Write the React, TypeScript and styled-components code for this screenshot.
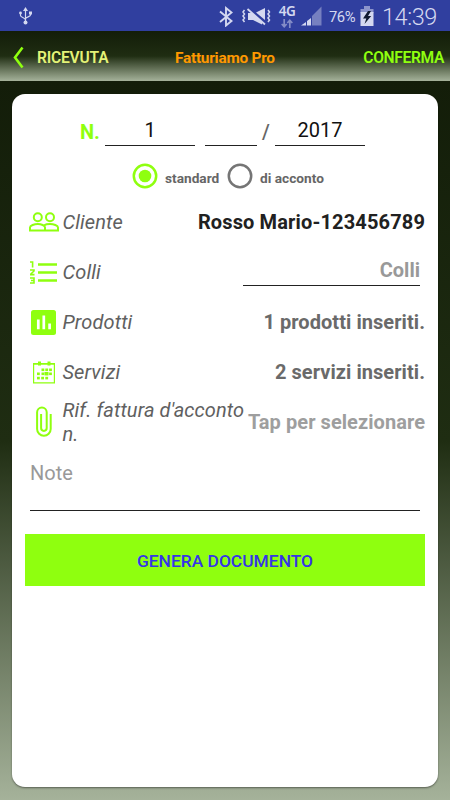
import React from 'react';
import styled, { createGlobalStyle } from 'styled-components';

const LIME = '#8fff0f';
const PALE = '#d4d8f0';

const GlobalStyle = createGlobalStyle`
  * { box-sizing: border-box; }
  body { margin: 0; font-family: Roboto, "Noto Sans", sans-serif; }
  svg { display: block; flex: none; }
`;

const Screen = styled.div`
  width: 450px;
  height: 800px;
  display: flex;
  flex-direction: column;
  overflow: hidden;
`;

const StatusBar = styled.header`
  height: 31px;
  display: flex;
  align-items: center;
  padding: 1px 12px 0 19px;
  background: #303f9f;
  color: ${PALE};
`;

const StatusIcon = styled.svg<{ $gap?: number }>`
  margin-left: ${(p) => p.$gap ?? 0}px;
`;

const Network = styled.span`
  width: 18px;
  height: 26px;
  margin-left: 6px;
  display: flex;
  flex-direction: column;
  align-items: center;
  font: 600 13.5px/16px "Noto Sans", sans-serif;
  letter-spacing: -0.5px;
  white-space: nowrap;
`;

const Battery = styled.span`
  width: 28px;
  margin-left: 7px;
  padding-top: 2px;
  font-size: 14.8px;
  letter-spacing: -0.5px;
  line-height: 30px;
  white-space: nowrap;
`;

const Clock = styled.span`
  margin-left: 8px;
  width: 56px;
  font-size: 23.5px;
  font-weight: 300;
  letter-spacing: -0.45px;
  line-height: 31px;
  padding-top: 2px;
  white-space: nowrap;
`;

const AppBar = styled.nav`
  height: 50px;
  display: grid;
  grid-template-columns: 37px 138px 1fr auto;
  align-items: center;
  padding: 3px 6px 0 0;
  background: linear-gradient(#131d09, #1f2d12 50%, #a5b29a);
`;

const BarLabel = styled.span<{ $color: string; $size?: number; $spacing?: number; $weight?: number }>`
  color: ${(p) => p.$color};
  font-size: ${(p) => p.$size ?? 16}px;
  font-weight: ${(p) => p.$weight ?? 600};
  letter-spacing: ${(p) => p.$spacing ?? 0}px;
  white-space: nowrap;
`;

const Main = styled.main`
  flex: 1;
  display: flex;
  padding: 13px 12px;
  background: linear-gradient(#131d09, #1f2d12 50%, #a5b29a);
`;

const Card = styled.section`
  flex: 1;
  display: flex;
  flex-direction: column;
  padding: 11px 13px 0;
  background: #fff;
  border-radius: 13px;
  box-shadow: 0 1px 2px rgba(0, 0, 0, 0.45);
`;

const NumberRow = styled.div`
  height: 54px;
  display: flex;
  align-items: center;
  padding-left: 55px;
  font-size: 20px;
`;

const Prefix = styled.span`
  width: 25px;
  color: ${LIME};
  font-weight: 700;
`;

const Slash = styled.span`
  width: 18px;
  text-align: center;
  color: #666;
  font-weight: 500;
`;

const Field = styled.span<{ $width: number; $align?: string }>`
  width: ${(p) => p.$width}px;
  height: 28px;
  line-height: 24px;
  border-bottom: 1px solid #222;
  text-align: ${(p) => p.$align ?? 'center'};
  color: #111;
  font-size: 20px;
`;

const NumberField = styled(Field)`
  margin-right: 10px;
`;

const HintField = styled(Field)`
  margin-right: 5px;
  color: #999;
  font-weight: 700;
`;

const RadioRow = styled.div`
  height: 34px;
  display: flex;
  align-items: center;
  padding-left: 107px;
`;

const RadioText = styled.span<{ $width: number }>`
  width: ${(p) => p.$width}px;
  margin-left: 7px;
  padding-top: 4px;
  color: #666;
  font-size: 13.7px;
  font-weight: 700;
  white-space: nowrap;
`;

const Rows = styled.div`
  margin-top: 4px;
`;

const Row = styled.div`
  height: 50px;
  display: flex;
  align-items: center;
`;

const IconSlot = styled.span`
  width: 37px;
  display: flex;
  justify-content: center;
`;

const Label = styled.span`
  flex: 1;
  padding-left: 0.5px;
  color: #606060;
  font-size: 20px;
  line-height: 24px;
  font-style: italic;
  letter-spacing: 0.1px;
`;

const Value = styled.span<{ $color: string; $spacing?: number }>`
  color: ${(p) => p.$color};
  font-size: 20px;
  font-weight: 700;
  letter-spacing: ${(p) => p.$spacing ?? 0.06}px;
  white-space: nowrap;
`;

const NoteField = styled.div`
  height: 64px;
  margin: 0 5px;
  padding-top: 14px;
  border-bottom: 1px solid #222;
  color: #999;
  font-size: 20px;
  line-height: 24px;
`;

const Submit = styled.button`
  height: 52px;
  margin-top: 23px;
  padding: 2px 0 0;
  border: 0;
  background: ${LIME};
  color: #3535e8;
  font-family: inherit;
  font-size: 17.4px;
  font-weight: 500;
`;

const Usb = () => (
  <StatusIcon width="13" height="18" viewBox="0 0 13 18" fill="none" stroke={PALE} strokeWidth="1.2">
    <path d="M6.5 2v13M1.5 6v2.5c0 2 5 2 5 4.5M11.5 6v2c0 2-5 1.7-5 4" />
    <path d="M6.5 0 9 4H4z" fill={PALE} stroke="none" />
    <circle cx="1.5" cy="6" r="1.4" fill={PALE} stroke="none" />
    <path d="M10 4.5h3v3h-3z" fill={PALE} stroke="none" />
    <circle cx="6.5" cy="15.5" r="2" fill={PALE} stroke="none" />
  </StatusIcon>
);

const Spacer = styled.span`
  flex: 1;
`;

const Radio = ({ on }: { on?: boolean }) => (
  <svg width="26" height="26" viewBox="0 0 26 26">
    <circle cx="13" cy="13" r="11.2" fill="none" stroke={on ? LIME : '#757575'} strokeWidth="2.5" />
    {on && <circle cx="13" cy="13" r="6.3" fill={LIME} />}
  </svg>
);

const PeopleIcon = () => (
  <svg width="30" height="20" viewBox="0 0 30 20" fill="none" stroke={LIME} strokeWidth="2">
    <circle cx="8.8" cy="5.2" r="4" />
    <circle cx="21" cy="5.2" r="4" />
    <path d="M1 18.5v-3c0-2.1 4.4-3.5 7.8-3.5s7.2 1.4 7.2 3.5v3zM15 13.3c1.4-.8 3.9-1.3 6-1.3 3.6 0 8 1.4 8 3.5v3H16" />
  </svg>
);

const ListIcon = () => (
  <svg width="28" height="23" viewBox="1 0 28 23" fill="none" stroke={LIME}>
    <path d="M9 3.5h19M9 11.5h19M9 19.5h19" strokeWidth="2.6" />
    <path d="M1 1h2.6v5.5M1 9h4v1L1.8 13v.6H5.5M1 17h4v5H1M2 19.5h3" strokeWidth="1.6" />
  </svg>
);

const ChartIcon = () => (
  <svg width="25" height="25" viewBox="0 0 25 25">
    <rect width="25" height="25" rx="2.5" fill={LIME} />
    <path d="M7.3 9.5v9.8M12.8 5.5v13.8M18.6 13.5v5.8" stroke="#fff" strokeWidth="2.7" />
  </svg>
);

const CALENDAR_CELLS = [
  [8.5, 7.5], [12.3, 7.5], [16.1, 7.5],
  [4, 11.5], [8.5, 11.5], [12.3, 11.5], [16.1, 11.5],
  [4, 15.8], [8.2, 15.8], [12.3, 15.8],
];

const CalendarIcon = () => (
  <svg width="22" height="23" viewBox="0 0 22 23" fill={LIME}>
    <path d="M.6 2.8h20.8v19H.6z" fill="none" stroke={LIME} strokeWidth="1.2" />
    <path d="M0 2h22v1.6H0zM5 .5h3v4H5zM14.5.5h3v4h-3z" />
    {CALENDAR_CELLS.map(([x, y]) => (
      <rect key={`${x}-${y}`} x={x} y={y} width="2.8" height="2.6" />
    ))}
    <path d="M11.5 11h4v3.4h-4z" />
  </svg>
);

const ClipIcon = () => (
  <svg width="16" height="32" viewBox="0 0 16 32" fill="none" stroke={LIME} strokeWidth="2">
    <path d="M14.7 8v15a6.8 6.8 0 0 1-13.6 0V6.3a4.8 4.8 0 0 1 9.6 0v15.8a2.8 2.8 0 0 1-5.6 0V8" />
  </svg>
);

export default function App() {
  return (
    <>
      <GlobalStyle />
      <Screen>
        <StatusBar>
          <Usb />
          <Spacer />
          <StatusIcon width="14" height="21" viewBox="0 0 14 21" fill="none" stroke={PALE} strokeWidth="1.9">
            <path d="m1 5.5 11.5 9.5-5.5 4.5V2l5.5 4.5L1 16" />
          </StatusIcon>
          <StatusIcon $gap={9} width="30" height="20" viewBox="0 0 30 20" fill="none" stroke={PALE}>
            <path d="m2.5 4-1.5 2 1.5 2L1 10l1.5 2L1 14l1.5 2M26 4l1.5 2L26 8l1.5 2-1.5 2 1.5 2-1.5 2" strokeWidth="1.5" />
            <path d="M6 7h4l10 8.5v3L11 14H6zM14 6.5 23 2v12z" fill={PALE} stroke="none" />
            <path d="m7 2.5 17 15.5" stroke="#303f9f" strokeWidth="2" />
            <path d="m5.5 3 17.5 15.5" strokeWidth="1.8" />
          </StatusIcon>
          <Network>
            4G
            <svg width="12" height="9" viewBox="0 0 12 9" fill="none" stroke="#858dc7" strokeWidth="1.7">
              <path d="M3.2 0v7.5M.7 5l2.5 2.7L5.7 5M8.8 9V1.5M6.3 4l2.5-2.7L11.3 4" />
            </svg>
          </Network>
          <StatusIcon $gap={5} width="21" height="20" viewBox="0 0 21 20">
            <path d="M0 19.5 5 16v3.5zM6 15l4-3v7.5H6z" fill={PALE} />
            <path d="M11 10 20.5.5v19H11z" fill="#7680c0" />
          </StatusIcon>
          <Battery>76%</Battery>
          <StatusIcon $gap={3} width="14" height="20" viewBox="0 0 14 20">
            <path d="M4 0h6v3h3.5v4H.5V3H4z" fill="#8c94cb" />
            <path d="M.5 6h13v14H.5z" fill={PALE} />
            <path d="M8 5 3 12.5h3.3L4.5 18l6.7-8H8L11 5z" fill="#111a30" />
          </StatusIcon>
          <Clock>14:39</Clock>
        </StatusBar>
        <AppBar>
          <svg width="24" height="24" viewBox="0 0 24 24" fill="none" stroke={LIME} strokeWidth="2.6">
            <path d="m22.5 1.5-7.5 10 7.5 10" />
          </svg>
          <BarLabel $color="#e4f277" $size={15.6} $spacing={-0.2}>RICEVUTA</BarLabel>
          <BarLabel $color="#ff9800" $size={15.4} $weight={700} $spacing={-0.25}>Fatturiamo Pro</BarLabel>
          <BarLabel $color={LIME} $size={15.6} $spacing={-0.35}>CONFERMA</BarLabel>
        </AppBar>
        <Main>
          <Card>
            <NumberRow>
              <Prefix>N.</Prefix>
              <NumberField $width={90}>1</NumberField>
              <Field $width={52} />
              <Slash>/</Slash>
              <Field $width={90}>2017</Field>
            </NumberRow>
            <RadioRow>
              <Radio on />
              <RadioText $width={62}>standard</RadioText>
              <Radio />
              <RadioText $width={70}>di acconto</RadioText>
            </RadioRow>
            <Rows>
              <Row>
                <IconSlot><PeopleIcon /></IconSlot>
                <Label>Cliente</Label>
                <Value $color="#212121" $spacing={0.14}>Rosso Mario-123456789</Value>
              </Row>
              <Row>
                <IconSlot><ListIcon /></IconSlot>
                <Label>Colli</Label>
                <HintField $width={177} $align="right">Colli</HintField>
              </Row>
              <Row>
                <IconSlot><ChartIcon /></IconSlot>
                <Label>Prodotti</Label>
                <Value $color="#6a6a6a">1 prodotti inseriti.</Value>
              </Row>
              <Row>
                <IconSlot><CalendarIcon /></IconSlot>
                <Label>Servizi</Label>
                <Value $color="#6a6a6a">2 servizi inseriti.</Value>
              </Row>
              <Row>
                <IconSlot><ClipIcon /></IconSlot>
                <Label>Rif. fattura d'acconto n.</Label>
                <Value $color="#9e9e9e">Tap per selezionare</Value>
              </Row>
            </Rows>
            <NoteField>Note</NoteField>
            <Submit>GENERA DOCUMENTO</Submit>
          </Card>
        </Main>
      </Screen>
    </>
  );
}
